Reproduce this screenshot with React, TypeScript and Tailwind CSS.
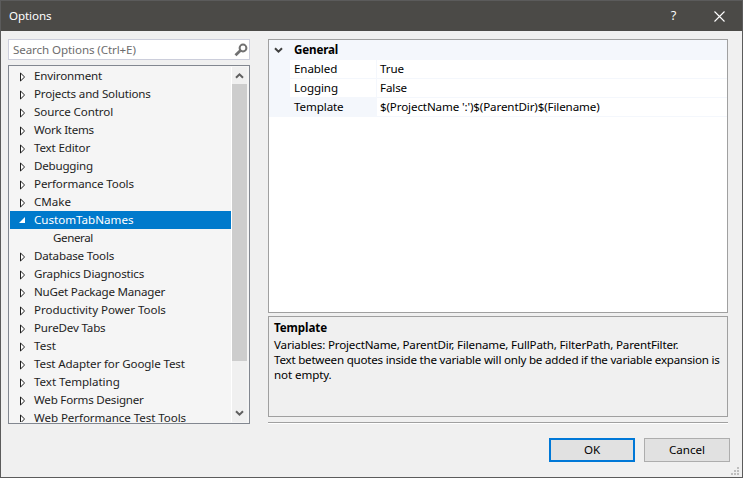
type Item = { label: string; tracking?: string; child?: boolean; selected?: boolean };

const items: Item[] = [
  { label: "Environment", tracking: "tracking-[-0.18px]" },
  { label: "Projects and Solutions", tracking: "tracking-[-0.18px]" },
  { label: "Source Control", tracking: "tracking-[-0.1px]" },
  { label: "Work Items", tracking: "tracking-[-0.27px]" },
  { label: "Text Editor", tracking: "tracking-[-0.16px]" },
  { label: "Debugging", tracking: "tracking-[-0.22px]" },
  { label: "Performance Tools", tracking: "tracking-[-0.12px]" },
  { label: "CMake" },
  { label: "CustomTabNames", selected: true },
  { label: "General", child: true, tracking: "tracking-[-0.4px]" },
  { label: "Database Tools", tracking: "tracking-[-0.18px]" },
  { label: "Graphics Diagnostics", tracking: "tracking-[-0.2px]" },
  { label: "NuGet Package Manager", tracking: "tracking-[-0.22px]" },
  { label: "Productivity Power Tools", tracking: "tracking-[-0.05px]" },
  { label: "PureDev Tabs", tracking: "tracking-[-0.18px]" },
  { label: "Test" },
  { label: "Test Adapter for Google Test", tracking: "tracking-[-0.13px]" },
  { label: "Text Templating", tracking: "tracking-[-0.04px]" },
  { label: "Web Forms Designer", tracking: "tracking-[-0.22px]" },
  { label: "Web Performance Test Tools", tracking: "tracking-[-0.08px]" },
];

const properties = [
  { name: "Enabled", value: "True" },
  { name: "Logging", value: "False" },
  { name: "Template", value: "$(ProjectName ':')$(ParentDir)$(Filename)", active: true },
];

function Chevron({ down = false, className = "" }: { down?: boolean; className?: string }) {
  return (
    <svg width="9" height="7" viewBox="0 0 9 7" className={className} fill="none" stroke="currentColor" strokeWidth="2">
      <path d={down ? "M1 1.2 4.5 4.7 8 1.2" : "M1 5.8 4.5 2.3 8 5.8"} />
    </svg>
  );
}

function TreeRow({ item }: { item: Item }) {
  return (
    <div className={`flex h-[18px] shrink-0 items-center ${item.selected ? "bg-[#007acc] text-white" : ""}`}>
      <div className={item.child ? "w-[43px]" : "w-6"}>
        {item.child ? null : item.selected ? (
          <svg width="6" height="6" viewBox="0 0 6 6" className="ml-[9px]">
            <path d="M6 0V6H0Z" fill="#fff" />
          </svg>
        ) : (
          <svg width="6" height="10" viewBox="0 0 6 10" className="mt-px ml-[10px]">
            <path d="M.5 1 4.6 5 .5 9Z" fill="#fff" stroke="#1e1e1e" />
          </svg>
        )}
      </div>
      <span className={`leading-[18px] ${item.tracking ?? ""}`}>{item.label}</span>
    </div>
  );
}

export default function App() {
  return (
    <div className="flex h-[478px] w-[743px] flex-col overflow-hidden border border-[#5b5b5b] bg-[#f0f0f0] font-['Noto_Sans','Open_Sans',sans-serif] text-[11.6px] whitespace-nowrap text-[#1e1e1e]">
      <header className="flex h-[30px] shrink-0 items-center bg-[#4b4a47] pl-2 text-white">
        <span className="flex-1 tracking-[-0.1px]">Options</span>
        <span className="w-[45px] text-center font-['Open_Sans',sans-serif] text-[13px]">?</span>
        <span className="flex w-[46px] justify-center">
          <svg width="11" height="11" viewBox="0 0 11 11" stroke="#fff" strokeWidth="1.1">
            <path d="M.5.5 10.5 10.5M10.5.5.5 10.5" />
          </svg>
        </span>
      </header>

      <div className="flex gap-[18px] px-[7px] pt-2">
        <aside className="flex w-[242px] shrink-0 flex-col gap-[5px]">
          <div className="flex h-[21px] items-center border border-[#cccedb] bg-white pr-px pl-1 text-[#6d6d6d]">
            <span className="flex-1 tracking-[-0.1px]">Search Options (Ctrl+E)</span>
            <svg width="14" height="14" viewBox="0 0 14 14" fill="none" stroke="#717171">
              <circle cx="9" cy="5" r="3.4" strokeWidth="2" />
              <path d="M6.4 7.6 1.5 12.3" strokeWidth="2.8" />
            </svg>
          </div>
          <div className="flex h-[359px] border border-[#828790] bg-[#f5f5f5] p-px">
            <div className="flex w-[221px] shrink-0 flex-col overflow-hidden">
              {items.map((item) => (
                <TreeRow key={item.label} item={item} />
              ))}
            </div>
            <div className="flex w-[16px] flex-col items-center border-l border-white bg-[#f0f0f0] text-[#606060]">
              <div className="flex h-[17px] items-center"><Chevron /></div>
              <div className="h-[277px] w-[15px] bg-[#cdcdcd]" />
              <div className="flex-1" />
              <div className="flex h-[17px] items-center"><Chevron down /></div>
            </div>
          </div>
        </aside>

        <main className="flex w-[460px] flex-col text-black">
          <section className="flex h-[274px] flex-col border border-[#a0a0a0] bg-white">
            <div className="flex h-5 items-center bg-[#f4f7fc] pl-[5px] font-bold tracking-[-0.15px]">
              <Chevron down className="mr-[11px] text-[#404040]" />
              General
            </div>
            {properties.map((property) => (
              <div key={property.name} className="flex h-[19px] leading-[18px]">
                <div className="w-[21px] bg-[#f4f7fc]" />
                <div
                  className={`w-[87px] border-r border-b border-[#f4f7fc] pl-1 tracking-[-0.1px] ${property.active ? "bg-[#f4f7fc]" : ""}`}
                >
                  {property.name}
                </div>
                <div className="flex-1 border-b border-[#f4f7fc] pl-[3px] tracking-[-0.12px]">{property.value}</div>
              </div>
            ))}
          </section>
          <section className="mt-[3px] h-[101px] border border-[#a0a0a0] px-[5px] pt-[2px]">
            <h2 className="h-[18px] leading-[17px] font-bold tracking-[-0.1px]">Template</h2>
            <p className="leading-[15px] tracking-[-0.17px]">Variables: ProjectName, ParentDir, Filename, FullPath, FilterPath, ParentFilter.</p>
            <p className="leading-[15px] tracking-[-0.22px]">Text between quotes inside the variable will only be added if the variable expansion is</p>
            <p className="leading-[15px] tracking-[-0.1px]">not empty.</p>
          </section>
          <div className="mt-[5px] h-[2px] border-t border-[#a0a0a0] bg-white" />
        </main>
      </div>

      <footer className="mt-[14px] flex justify-end gap-[9px] pr-3 text-black">
        <button className="h-6 w-[86px] border-2 border-[#0078d7] bg-[#e1e1e1]">OK</button>
        <button className="h-6 w-[86px] border border-[#adadad] bg-[#e1e1e1]">Cancel</button>
      </footer>
      <svg width="8" height="8" viewBox="0 0 8 8" fill="#bfbfbf" className="mt-[5px] mr-[3px] self-end">
        <path d="M6 0h2v2H6zM3 3h2v2H3zM6 3h2v2H6zM0 6h2v2H0zM3 6h2v2H3zM6 6h2v2H6z" />
      </svg>
    </div>
  );
}
